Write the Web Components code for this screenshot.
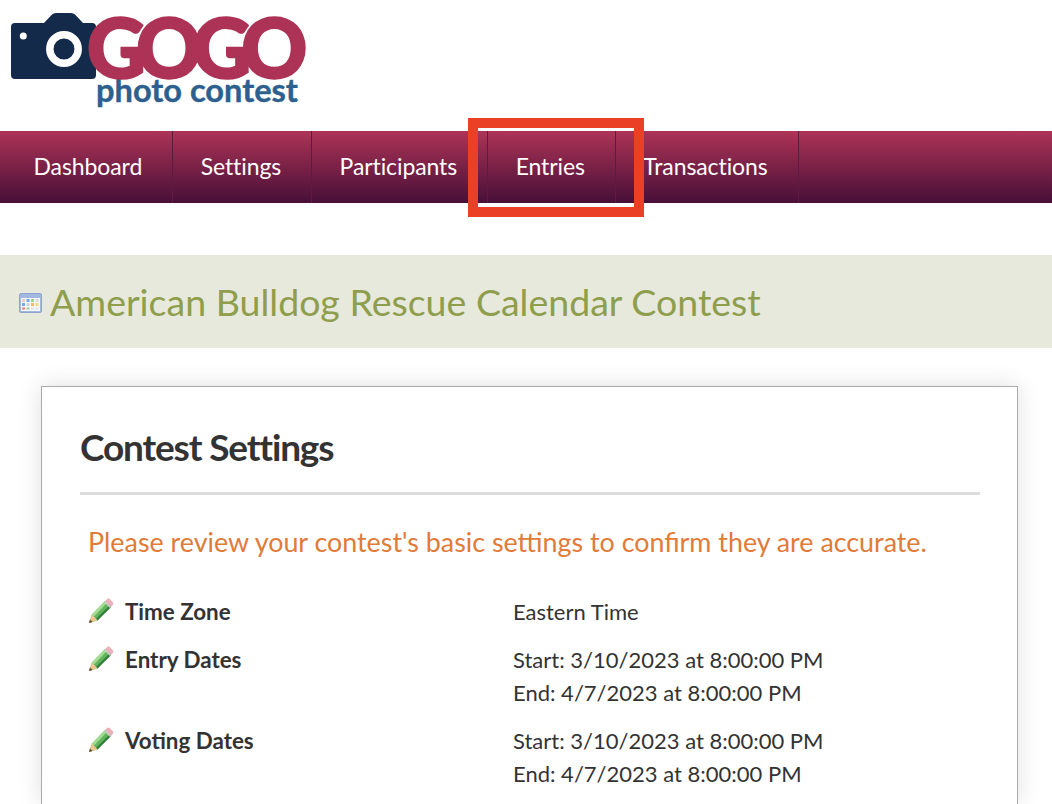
<!DOCTYPE html>
<html>
<head>
<meta charset="utf-8">
<title>GOGO photo contest</title>
<style>
  html, body { margin: 0; height: 804px; overflow: hidden; background: #fff; }
  body { font-family: "Lato", "Liberation Sans", sans-serif; position: relative; }
</style>
</head>
<body>
<gogo-logo></gogo-logo>
<gogo-nav>
  <nav-item>Dashboard</nav-item>
  <nav-item>Settings</nav-item>
  <nav-item>Participants</nav-item>
  <nav-item>Entries</nav-item>
  <nav-item>Transactions</nav-item>
</gogo-nav>
<contest-band>American Bulldog Rescue Calendar Contest</contest-band>
<settings-card heading="Contest Settings" intro="Please review your contest's basic settings to confirm they are accurate.">
  <setting-row label="Time Zone"><div>Eastern Time</div></setting-row>
  <setting-row label="Entry Dates"><div>Start: 3/10/2023 at 8:00:00 PM</div><div>End: 4/7/2023 at 8:00:00 PM</div></setting-row>
  <setting-row label="Voting Dates"><div>Start: 3/10/2023 at 8:00:00 PM</div><div>End: 4/7/2023 at 8:00:00 PM</div></setting-row>
</settings-card>
<call-out></call-out>

<script>
// Logo: camera drawn as svg, wordmark kept as real text
class GogoLogo extends HTMLElement {
  constructor() {
    super();
    this.attachShadow({ mode: 'open' }).innerHTML = `
      <style>
        :host { display: block; height: 131px; box-sizing: border-box; padding: 13px 0 0 11px; }
        .top { display: flex; align-items: flex-start; height: 62px; }
        svg { display: block; flex: none; }
        .gogo {
          font-weight: 900; font-size: 81px; line-height: 62px; height: 62px; color: #ad3356;
          -webkit-text-stroke: 2.500px #ad3356;
          margin: 3px 0 0 -9px; letter-spacing: -9.500px; position: relative; white-space: nowrap;
        }
        .sub {
          font-weight: 700; font-size: 32.600px; line-height: 28px; color: #2d5f8f;
          -webkit-text-stroke: .4px #2d5f8f;
          margin: 1px 0 0 85px; white-space: nowrap;
        }
      </style>
      <div class="top">
        <svg width="85" height="66" viewBox="0 0 85 66">
          <path fill="#132a4a" d="M4 10 H33 L41 1.5 Q42.500 0 45 0 H60 Q62.500 0 64 1.500 L72 10 H81 Q85 10 85 14 V62 Q85 66 81 66 H4 Q0 66 0 62 V14 Q0 10 4 10 Z"/>
          <circle cx="12.300" cy="23" r="3.500" fill="#fff"/>
          <circle cx="53" cy="36" r="14.200" fill="none" stroke="#fff" stroke-width="7.500"/>
        </svg>
        <div class="gogo">GOGO</div>
      </div>
      <div class="sub">photo contest</div>`;
  }
}

class GogoNav extends HTMLElement {
  constructor() {
    super();
    this.attachShadow({ mode: 'open' }).innerHTML = `
      <style>
        :host {
          display: flex; height: 72px; padding-left: 6px;
          background: linear-gradient(#ad3356, #470f38);
        }
      </style>
      <slot></slot>`;
  }
}

class NavItem extends HTMLElement {
  constructor() {
    super();
    this.attachShadow({ mode: 'open' }).innerHTML = `
      <style>
        :host {
          display: flex; align-items: center; box-sizing: border-box;
          padding: 0 30px 2px 27.500px; border-right: 1px solid #5f1a42;
          color: #fff; font-size: 23px; line-height: 70px; letter-spacing: -.1px; white-space: nowrap;
        }
      </style>
      <slot></slot>`;
  }
}

class IconCalendar extends HTMLElement {
  constructor() {
    super();
    this.attachShadow({ mode: 'open' }).innerHTML = `
      <style>:host { display: block; width: 23px; height: 20px; flex: none; } svg { display: block; }</style>
      <svg width="23" height="20" viewBox="0 0 23 20">
        <rect x=".5" y=".5" width="22" height="19" rx="1.500" fill="#a3b8e0" stroke="#8ea5d4"/>
        <rect x="2" y="5" width="19" height="13" fill="#f6f7f9"/>
        <rect x="3" y="6" width="3" height="3" fill="#e6cfc4"/>
        <rect x="7.500" y="6" width="3" height="3" fill="#6eabee"/>
        <rect x="12" y="6" width="3" height="3" fill="#a3d092"/>
        <rect x="16.500" y="6" width="3" height="3" fill="#d9dbe0"/>
        <rect x="3" y="10" width="3" height="3" fill="#6eabee"/>
        <rect x="7.500" y="10" width="3" height="3" fill="#cdd5e2"/>
        <rect x="12" y="10" width="3" height="3" fill="#f4b866"/>
        <rect x="16.500" y="10" width="3" height="3" fill="#f5d680"/>
        <rect x="3" y="14.500" width="3" height="2" fill="#e9787a"/>
        <rect x="7.500" y="14.500" width="3" height="2" fill="#a3d092"/>
        <rect x="12" y="14.500" width="3" height="2" fill="#e2e3e6"/>
        <rect x="16.500" y="14.500" width="3" height="2" fill="#e2e3e6"/>
      </svg>`;
  }
}

class IconPencil extends HTMLElement {
  constructor() {
    super();
    this.attachShadow({ mode: 'open' }).innerHTML = `
      <style>:host { display: block; width: 26px; height: 26px; flex: none; } svg { display: block; }</style>
      <svg width="26" height="26" viewBox="0 0 26 26">
        <path d="M1 25 L4 16.500 L17 3 L23 9 L9.500 22.500 Z" fill="#62b35c"/>
        <path d="M4 16.500 L17 3 L19 5 L6 18.500 Z" fill="#a2dc92"/>
        <path d="M9.500 22.500 L23 9 L21.500 7.500 L8 21 Z" fill="#2f7f3c"/>
        <path d="M1 25 L4 16.500 L9.500 22.500 Z" fill="#ecc78f"/>
        <path d="M1 25 L2 21.500 L4.500 24 Z" fill="#5c4a2c"/>
        <path d="M17 3 L19.500 .8 Q20.500 0 21.500 .8 L25 4.500 Q25.800 5.500 25 6.500 L23 9 Z" fill="#eeb0b8"/>
        <path d="M16 4 L22 10 L23 9 L17 3 Z" fill="#c9ccc9"/>
      </svg>`;
  }
}

class ContestBand extends HTMLElement {
  constructor() {
    super();
    this.attachShadow({ mode: 'open' }).innerHTML = `
      <style>
        :host {
          display: flex; align-items: center; gap: 8px; height: 93px; margin-top: 52px;
          padding-left: 19px; box-sizing: border-box; background: #e7e9dc;
          color: #8f9e4c; font-size: 37.500px; white-space: nowrap;
        }
        icon-calendar { margin-top: 2px; }
      </style>
      <icon-calendar></icon-calendar><slot></slot>`;
  }
}

class SettingsCard extends HTMLElement {
  constructor() {
    super();
    this.attachShadow({ mode: 'open' }).innerHTML = `
      <style>
        :host {
          display: block; box-sizing: border-box; height: 418px; margin: 38px 34px 0 41px;
          padding: 36px 37px 0 38px; background: #fff; border: 1px solid #aaa; border-bottom: 0;
          box-shadow: 0 0 22px rgba(0,0,0,.13); color: #333;
        }
        h2 {
          margin: 0; padding-bottom: 21px; border-bottom: 3px solid #ddd;
          font-size: 37px; line-height: 48px; font-weight: 700; letter-spacing: -1.150px;
        }
        p {
          margin: 27px 0 33px 8px; color: #e07b39; font-size: 26.850px; line-height: 40px; white-space: nowrap;
        }
        .rows { display: flex; flex-direction: column; gap: 15px; margin-left: 8px; }
      </style>
      <h2></h2>
      <p></p>
      <div class="rows"><slot></slot></div>`;
    this.shadowRoot.querySelector('h2').textContent = this.getAttribute('heading');
    this.shadowRoot.querySelector('p').textContent = this.getAttribute('intro');
  }
}

class SettingRow extends HTMLElement {
  constructor() {
    super();
    this.attachShadow({ mode: 'open' }).innerHTML = `
      <style>
        :host {
          display: grid; grid-template-columns: 425px 1fr;
          font-size: 22px; line-height: 33px; color: #333;
        }
        .label { display: flex; align-items: flex-start; gap: 11px; font-weight: 700; font-size: 22.400px; }
        icon-pencil { margin-top: 3px; }
      </style>
      <div class="label"><icon-pencil></icon-pencil><span></span></div>
      <div><slot></slot></div>`;
    this.shadowRoot.querySelector('span').textContent = this.getAttribute('label');
  }
}

// Red annotation box drawn over the nav
class CallOut extends HTMLElement {
  constructor() {
    super();
    this.attachShadow({ mode: 'open' }).innerHTML = `
      <style>
        :host {
          position: absolute; left: 468px; top: 118px; width: 176px; height: 99px;
          box-sizing: border-box; border: 10px solid #ea4025;
        }
      </style>`;
  }
}

customElements.define('gogo-logo', GogoLogo);
customElements.define('gogo-nav', GogoNav);
customElements.define('nav-item', NavItem);
customElements.define('icon-calendar', IconCalendar);
customElements.define('icon-pencil', IconPencil);
customElements.define('contest-band', ContestBand);
customElements.define('settings-card', SettingsCard);
customElements.define('setting-row', SettingRow);
customElements.define('call-out', CallOut);
</script>
</body>
</html>
